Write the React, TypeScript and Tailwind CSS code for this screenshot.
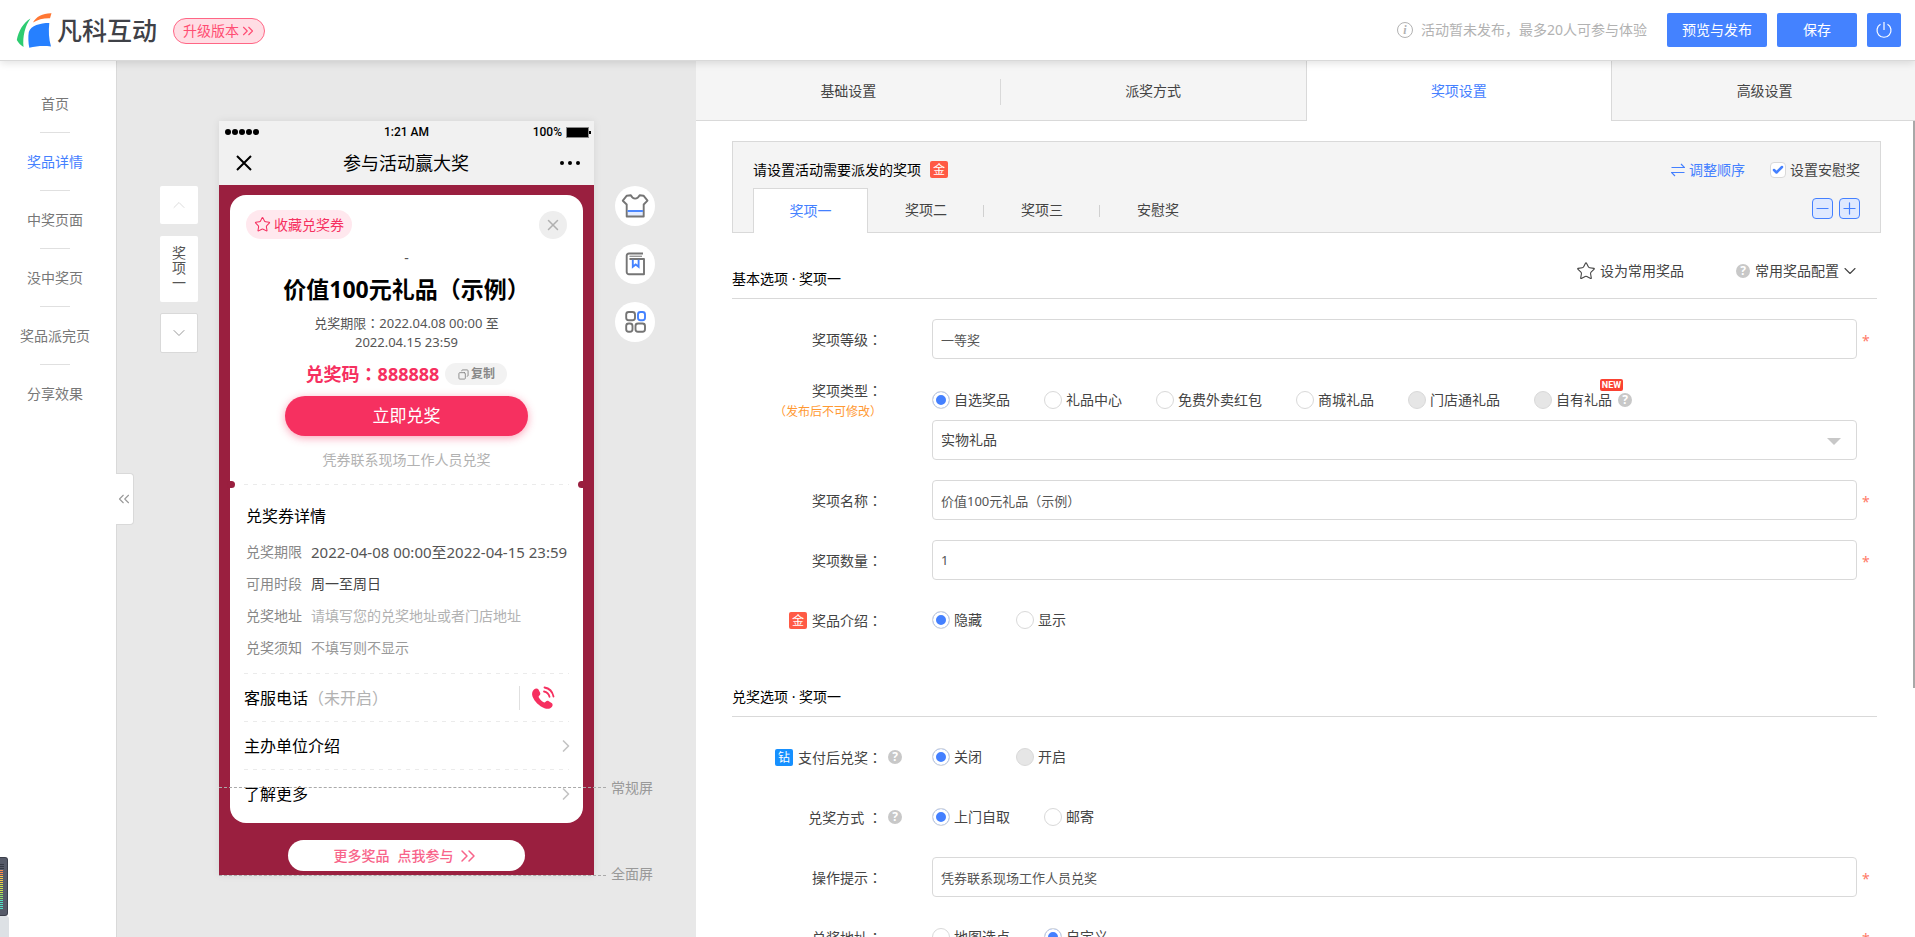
import React from 'react';
import {
  Check,
  ChevronDown,
  ChevronRight,
  ChevronUp,
  ChevronsLeft,
  ChevronsRight,
  Copy,
  Minus,
  Plus,
  Star,
  X,
} from 'lucide-react';

const PAGES = ['首页', '奖品详情', '中奖页面', '没中奖页', '奖品派完页', '分享效果'];

const SETTING_TABS = ['基础设置', '派奖方式', '奖项设置', '高级设置'];

const PRIZE_TABS = ['奖项一', '奖项二', '奖项三', '安慰奖'];

const COUPON_INFO = [
  { label: '兑奖期限', value: '2022-04-08 00:00至2022-04-15 23:59', style: 'text-[15px] text-[#555]' },
  { label: '可用时段', value: '周一至周日', style: 'text-[#444]' },
  { label: '兑奖地址', value: '请填写您的兑奖地址或者门店地址', style: 'text-[#b2b2b2]' },
  { label: '兑奖须知', value: '不填写则不显示', style: 'text-[#999]' },
];

type Option = { label: string; disabled?: boolean; isNew?: boolean };

const PRIZE_TYPES: Option[] = [
  { label: '自选奖品' },
  { label: '礼品中心' },
  { label: '免费外卖红包' },
  { label: '商城礼品' },
  { label: '门店通礼品', disabled: true },
  { label: '自有礼品', disabled: true, isNew: true },
];

// the full-width colon sits in the middle of its box in the TC face
const Colon = () => <span className="font-['Noto_Sans_CJK_TC',sans-serif]">：</span>;

const Logo = () => (
  <svg className="w-9 h-9" viewBox="0 0 36 36">
    <path d="M14.5 6.5C7 11 2.500 19 .8 28c1.500 3 4 5 6.700 7C6.500 24 9 14 14.500 6.500z" fill="#2ecc71" />
    <path d="M17 10.500C20 4.500 27 1 35.500 1.200L34 6.300C28 6 22 7.500 17 10.500z" fill="#ff7733" />
    <path d="M12.800 20C15 13.500 24 11 33.300 11c-.9 8-.5 16 1.700 23.500-7.500-.8-14.500-.5-21.700 1.300-1-5-1.300-11-.5-15.800z" fill="#2680ff" />
  </svg>
);

const Help = () => (
  <span className="w-[14px] h-[14px] rounded-full bg-[#c8c8c8] text-white text-xs leading-[14px] font-bold text-center shrink-0">?</span>
);

const GoldBadge = () => (
  <span className="w-[18px] h-[17px] rounded-xs bg-[#ff5a45] text-white text-xs leading-[17px] text-center shrink-0">金</span>
);

const RadioGroup = ({ name, options, checked }: { name: string; options: Option[]; checked: number }) => (
  <div className="flex items-center gap-[34px] h-10 text-[#444]">
    {options.map((option, i) => (
      <div key={option.label} className="relative flex items-center gap-[6px]">
        <label className="flex items-center gap-1">
          <input
            type="radio"
            name={name}
            defaultChecked={checked === i}
            disabled={option.disabled}
            className="appearance-none w-[18px] h-[18px] rounded-full border border-[#d9d9d9] bg-white checked:bg-[#4480ff] checked:shadow-[inset_0_0_0_3px_#fff] disabled:bg-[#e6e6e6]"
          />
          {option.label}
        </label>
        {option.isNew && (
          <>
            <Help />
            <span className="absolute -top-[11px] left-[66px] w-[23px] h-3 rounded-xs bg-[#fa4232] text-white text-[9px] leading-3 font-bold text-center font-['Roboto',sans-serif]">
              NEW
            </span>
          </>
        )}
      </div>
    ))}
  </div>
);

type FieldProps = {
  label: string;
  id?: string;
  badge?: React.ReactNode;
  help?: boolean;
  note?: string;
  required?: boolean;
  children: React.ReactNode;
};

const Field = ({ label, id, badge, help, note, required, children }: FieldProps) => (
  <div className="flex items-start mt-5">
    <div className={note ? 'w-[150px] h-10 pt-px text-right whitespace-nowrap' : 'w-[150px] h-10 flex justify-end items-center whitespace-nowrap'}>
      {badge && <span className="flex mr-[5px]">{badge}</span>}
      <label htmlFor={id} className={note ? 'block h-[22px] leading-5 text-[#444]' : 'h-5 leading-5 text-[#444]'}>
        {label}
        <Colon />
      </label>
      {note && <p className="text-xs leading-5 text-[#ff9933]">{note}</p>}
    </div>
    <div className="w-[50px] h-10 pl-[6px] flex items-center shrink-0">{help && <Help />}</div>
    <div className="flex-1 min-w-0">{children}</div>
    <span className="w-5 h-10 pl-[5px] leading-[44px] text-[#ff7a66] shrink-0">{required && '*'}</span>
  </div>
);

const TextInput = ({ id, value }: { id: string; value: string }) => (
  <input
    id={id}
    type="text"
    defaultValue={value}
    className="block w-full h-10 px-2 rounded-sm border border-[#d9d9d9] text-[13px] text-[#555] bg-white"
  />
);

const Header = () => (
  <header className="relative z-10 h-[61px] shrink-0 flex items-center bg-white border-b border-[#d9d9d9] shadow-[0_2px_8px_rgba(0,0,0,0.12)] pl-4 pr-[14px]">
    <a href="#" className="flex items-center gap-[5px]">
      <Logo />
      <span className="text-[25px] leading-9 font-medium text-[#3f4147]">凡科互动</span>
    </a>
    <button className="ml-4 mt-[2px] h-[26px] w-[92px] flex items-center justify-center rounded-full border border-[#ff6685] bg-[#ffdde4] text-[#ff4d73]">
      升级版本
      <ChevronsRight className="w-[18px] h-[18px] -mr-[2px]" strokeWidth={1.5} />
    </button>
    <p className="ml-auto flex items-center gap-2 text-[#b2b2b2]">
      <span className="w-4 h-4 rounded-full border border-[#b2b2b2] text-xs leading-[14px] italic font-bold text-center font-['Liberation_Serif',serif]">i</span>
      活动暂未发布，最多20人可参与体验
    </p>
    <button className="ml-5 w-[100px] h-[34px] rounded-xs bg-[#4482ff] text-white">预览与发布</button>
    <button className="ml-[10px] w-20 h-[34px] rounded-xs bg-[#4482ff] text-white">保存</button>
    <button aria-label="退出" className="ml-[10px] w-[34px] h-[34px] flex items-center justify-center rounded-xs bg-[#4482ff] text-white">
      <svg className="w-[18px] h-[18px]" viewBox="0 0 18 18" fill="none" stroke="currentColor" strokeWidth="1.200">
        <path d="M9 1v8M5.500 3.200a7 7 0 1 0 7 0" />
      </svg>
    </button>
  </header>
);

const Sidebar = () => (
  <nav className="relative w-[117px] shrink-0 bg-white border-r border-[#d9d9d9]">
    <ul className="w-[110px] pt-[14px] text-center">
      {PAGES.map((page, i) => (
        <li key={page}>
          {i > 0 && <div className="w-[30px] h-px mx-auto bg-[#e0e0e0]" />}
          <a href="#" className={i === 1 ? 'block leading-[57px] text-[#4480ff]' : 'block leading-[57px] text-[#777]'}>
            {page}
          </a>
        </li>
      ))}
    </ul>
    <button aria-label="收起" className="absolute top-[412px] left-[116px] w-[18px] h-[52px] pr-[2px] flex items-center justify-center bg-white border border-l-0 border-[#d9d9d9] rounded-r-sm text-[#999]">
      <ChevronsLeft className="w-[18px] h-[18px] shrink-0" strokeWidth={1.5} />
    </button>
    <svg className="absolute bottom-0 left-0 w-[9px] h-[80px]" viewBox="0 0 9 80">
      <path d="M0 59h6a3 3 0 0 1 3 3v18H0z" fill="#dde1e5" />
      <path d="M0 0h5a3 3 0 0 1 3 3v53a3 3 0 0 1-3 3H0z" fill="#3a3e4a" />
      <path d="M0 1h5a2 2 0 0 1 2 2v53a2 2 0 0 1-2 2H0z" fill="#565b69" />
      <path d="M0 7.500h4M0 9.500h4M0 11.500h4" stroke="#353944" />
      <path d="M0 13.500h3M0 15.500h3M0 17.500h3" stroke="#ff8c4d" />
      <path d="M0 19.500h3M0 21.500h3M0 23.500h3M0 25.500h3" stroke="#f7c948" />
      <path d="M0 27.500h3M0 29.500h3M0 31.500h3M0 33.500h3M0 35.500h3" stroke="#cfe04a" />
      <path d="M0 37.500h3M0 39.500h3M0 41.500h3" stroke="#8fe06a" />
      <path d="M0 43.500h3M0 45.500h3M0 47.500h3M0 49.500h3M0 51.500h3" stroke="#52e0c4" />
    </svg>
  </nav>
);

const Dashes = () => (
  <div className="h-px bg-[repeating-linear-gradient(90deg,#ebebeb_0_4px,transparent_4px_9px)]" />
);

const Phone = () => (
  <section className="relative w-[375px] shrink-0 bg-[#9a1f3f] pb-1 shadow-[0_0_8px_rgba(0,0,0,0.08)]">
    <div className="h-16 bg-[#f1f1f1] text-black">
      <div className="relative flex items-center justify-between h-[22px] px-[6px] text-xs font-medium font-['Roboto',sans-serif]">
        <span className="flex gap-px">
          {[0, 1, 2, 3, 4].map((dot) => (
            <i key={dot} className="w-[6px] h-[6px] rounded-full bg-black" />
          ))}
        </span>
        <span className="absolute inset-x-0 text-center">1:21 AM</span>
        <span className="flex items-center gap-1">
          100%
          <svg className="w-[25px] h-[11px] -mr-[3px]" viewBox="0 0 25 11">
            <rect x="0.500" y="0.500" width="22" height="10" fill="#000" stroke="#888" />
            <path d="M24 4v3" stroke="#000" strokeWidth="2" />
          </svg>
        </span>
      </div>
      <div className="flex items-center justify-between h-[42px] px-[17px] pb-[2px]">
        <svg className="w-4 h-4" viewBox="0 0 16 16" stroke="#000" strokeWidth="2">
          <path d="M1 1l14 14M15 1L1 15" />
        </svg>
        <h2 className="text-lg leading-6">参与活动赢大奖</h2>
        <span className="flex gap-1 -mr-[3px]">
          {[0, 1, 2].map((dot) => (
            <i key={dot} className="w-1 h-1 rounded-full bg-black" />
          ))}
        </span>
      </div>
    </div>

    <div className="mt-[10px] mx-[11px] pt-[15px] rounded-2xl bg-white">
      <div className="px-4 flex justify-between items-center">
        <button className="w-[106px] h-[29px] flex items-center justify-center gap-[3px] rounded-full bg-[#ffe8ee] text-[#f63060]">
          <Star className="w-[17px] h-[17px]" strokeWidth={1.5} />
          收藏兑奖券
        </button>
        <button aria-label="关闭" className="w-7 h-7 flex items-center justify-center rounded-full bg-[#eee] text-[#b0b0b0]">
          <X className="w-[18px] h-[18px]" />
        </button>
      </div>
      <div className="text-center">
        <p className="mt-[9px] leading-5 text-[#555]">-</p>
        <h1 className="mt-[5px] h-8 text-[23px] leading-8 font-bold text-black">价值100元礼品（示例）</h1>
        <p className="mt-2 h-[38px] text-[13px] leading-[19px] text-[#555]">
          兑奖期限<Colon />2022.04.08 00:00 至<br />
          2022.04.15 23:59
        </p>
        <div className="mt-3 h-[22px] flex items-center justify-center gap-[6px] text-lg leading-5 font-bold text-[#f63060]">
          <span className="h-[22px]">兑奖码<Colon />888888</span>
          <button className="w-[62px] h-[22px] flex items-center justify-center gap-[2px] rounded-full bg-[#f2f2f2] text-xs font-bold text-[#888]">
            <Copy className="w-[11px] h-[11px] -scale-x-100" />
            复制
          </button>
        </div>
        <button className="mt-[11px] w-[243px] h-10 rounded-full bg-[#f63060] text-[17px] text-white shadow-[0_2px_8px_rgba(246,48,96,0.45)] align-top">
          立即兑奖
        </button>
        <p className="mt-[14px] leading-5 text-[#b2b2b2]">凭券联系现场工作人员兑奖</p>
      </div>
      <div className="relative mt-[14px] px-[14px]">
        <Dashes />
        <i className="absolute -left-[3px] -top-[3px] w-[8px] h-[7px] rounded-full bg-[#9a1f3f]" />
        <i className="absolute -right-[3px] -top-[3px] w-[8px] h-[7px] rounded-full bg-[#9a1f3f]" />
      </div>
      <div className="px-4">
        <h3 className="mt-[19px] text-base leading-6 text-black">兑奖券详情</h3>
        <dl className="mt-2 mb-[9px]">
          {COUPON_INFO.map((row) => (
            <div key={row.label} className="flex gap-[9px] h-8 leading-8 whitespace-nowrap">
              <dt className="text-[#888]">{row.label}</dt>
              <dd className={row.style}>{row.value}</dd>
            </div>
          ))}
        </dl>
      </div>
      <div className="px-[14px] pb-[6px] text-base text-black">
        <Dashes />
        <div className="h-[47px] flex items-center">
          客服电话<span className="text-[#b2b2b2]">（未开启）</span>
          <a href="tel:" aria-label="客服电话" className="ml-auto mr-[14px] pl-[11px] h-6 flex items-center border-l border-[#e0e0e0]">
            <svg className="w-6 h-6" viewBox="0 0 24 24">
              <path d="M3 3.500C4.500 2 6.500 2 7.500 3.500L9 6.500c.7 1.200.3 2.300-.8 3.200-.8.7-.6 1.400 0 2.300 1 1.600 2.400 3 4 4 .9.600 1.600.6 2.400-.2.900-1 2-1.300 3.200-.6l2.800 1.800c1.400 1 1.300 2.700.2 4-1.800 2-4.600 2.300-7.300 1.200C8 20 3.500 15.500 1.500 10.500.7 8 1 5.300 3 3.500z" fill="#f63060" />
              <path d="M13 5.500c2.800.5 4.800 2.500 5.500 5.300M13.500 1.500c4.700.8 8 4.200 9 9" fill="none" stroke="#f63060" strokeWidth="1.800" strokeLinecap="round" />
            </svg>
          </a>
        </div>
        {['主办单位介绍', '了解更多'].map((item) => (
          <React.Fragment key={item}>
            <Dashes />
            <a href="#" className="h-[47px] flex items-center justify-between">
              {item}
              <ChevronRight className="w-5 h-5 -mr-[7px] text-[#c4c4c4]" strokeWidth={2} />
            </a>
          </React.Fragment>
        ))}
      </div>
    </div>
    <button className="mt-[17px] mx-auto w-[237px] h-[31px] flex items-center justify-center rounded-full bg-white text-sm font-medium text-[#f8648a]">
      <span>更多奖品</span>
      <span className="ml-2">点我参与</span>
      <ChevronsRight className="ml-[2px] w-6 h-6" strokeWidth={1.5} />
    </button>

    <div className="absolute top-[666px] left-0 w-[387px] border-t border-dashed border-[#aaa]" />
    <span className="absolute top-[657px] left-[392px] leading-5 text-[#999] whitespace-nowrap">常规屏</span>
    <div className="absolute top-[754px] left-0 w-[387px] border-t border-dashed border-[#aaa]" />
    <span className="absolute top-[743px] left-[392px] leading-5 text-[#999] whitespace-nowrap">全面屏</span>
  </section>
);

const ToolButton = ({ label, children }: { label: string; children: React.ReactNode }) => (
  <button aria-label={label} className="w-10 h-10 rounded-full bg-white">
    <svg className="w-10 h-10" viewBox="0 0 40 40" fill="none" stroke="#757575" strokeWidth="1.900" strokeLinejoin="round">
      {children}
    </svg>
  </button>
);

const Preview = () => (
  <main className="w-[579px] shrink-0 flex items-start justify-center gap-[21px] pt-[60px] pl-[2px] bg-[#e8e8e8]">
    <div className="mt-[65px] w-[38px] flex flex-col text-[#555]">
      <button aria-label="上一个" className="h-[38px] flex items-center justify-center rounded-xs bg-white text-[#ddd]">
        <ChevronUp className="w-5 h-5" strokeWidth={1.2} />
      </button>
      <button className="mt-3 h-[66px] px-3 pb-1 rounded-xs bg-white leading-[15px]">奖项一</button>
      <button aria-label="下一个" className="mt-[11px] h-10 flex items-center justify-center rounded-xs bg-white border border-[#d9d9d9] text-[#999]">
        <ChevronDown className="w-5 h-5" strokeWidth={1.2} />
      </button>
    </div>
    <Phone />
    <div className="mt-[65px] flex flex-col gap-[18px]">
      <ToolButton label="皮肤">
        <path d="M12 25.500h17v5H12z" fill="#e3ecff" stroke="none" />
        <path d="M7.800 14.700l4-5 4-.5c1 2.200 2.400 3.400 4.300 3.400s3.500-1.200 4.600-3.400l3.800.5 4 5-3.800 3.800v12H11.700v-12z" />
        <path d="M12.600 25h15.300" stroke="#4482ff" />
      </ToolButton>
      <ToolButton label="模板">
        <path d="M28 9.500H14a2.300 2.300 0 0 0-2.300 2.500v16a2.300 2.300 0 0 0 2.300 2.300h15V15H14.500" />
        <path d="M14.500 12.300H27" stroke="#999" strokeWidth="1.400" />
        <path d="M17.800 15.800v7l2.900-2.300 2.900 2.300v-7" stroke="#4482ff" strokeLinejoin="miter" />
      </ToolButton>
      <ToolButton label="组件">
        <rect x="11.200" y="10" width="8.800" height="8.300" rx="2.500" />
        <rect x="23" y="10" width="7" height="8.300" rx="2.500" stroke="#4482ff" />
        <rect x="11.200" y="21.500" width="6.300" height="8.300" rx="2.500" />
        <rect x="20.500" y="21.500" width="9.500" height="8.300" rx="2.500" />
      </ToolButton>
    </div>
  </main>
);

const SectionTitle = ({ title, children }: { title: string; children?: React.ReactNode }) => (
  <div className="h-[65px] pt-[26px] flex items-center justify-between border-b border-[#d9d9d9]">
    <h3 className="text-black">{title}</h3>
    {children}
  </div>
);

const Settings = () => (
  <section className="relative flex-1 min-w-0 flex flex-col bg-white overflow-hidden">
    <div className="flex h-[60px] shrink-0 -mr-[2px] text-[#444]">
      {SETTING_TABS.map((tab, i) => (
        <button
          key={tab}
          className={
            i === 2
              ? 'flex-1 bg-white border-x border-[#d9d9d9] text-[#4480ff]'
              : 'relative flex-1 bg-[#f5f5f5] border-b border-[#d9d9d9]'
          }
        >
          {i === 0 && <i className="absolute right-0 top-[18px] w-px h-[26px] bg-[#d9d9d9]" />}
          {tab}
        </button>
      ))}
    </div>
    <div className="flex-1 min-h-0 overflow-hidden pl-9 pr-[38px]">
      <div className="mt-5 -mr-1 bg-[#f4f4f4] border border-b-0 border-[#d9d9d9]">
        <div className="h-[46px] pt-[10px] px-5 flex items-center">
          <h2 className="text-black">请设置活动需要派发的奖项</h2>
          <span className="ml-[9px] mb-[2px] flex"><GoldBadge /></span>
          <button className="ml-auto flex items-center gap-1 text-[#4480ff]">
            <svg className="w-[14px] h-[14px]" viewBox="0 0 14 14" fill="none" stroke="currentColor" strokeWidth="1.200">
              <path d="M.5 4.500h13L10 1M13.500 9.500H.5L4 13" />
            </svg>
            调整顺序
          </button>
          <label className="relative ml-[25px] flex items-center gap-1 text-[#444]">
            <input type="checkbox" defaultChecked className="peer appearance-none w-4 h-4 rounded-sm border border-[#d9d9d9] bg-white" />
            <Check className="absolute left-[2px] w-3 h-3 text-[#4480ff] opacity-0 peer-checked:opacity-100" strokeWidth={5} />
            设置安慰奖
          </label>
        </div>
        <div className="h-[45px] px-5 flex items-center border-b border-[#d9d9d9]">
          {PRIZE_TABS.map((tab, i) => (
            <button
              key={tab}
              className={
                i === 0
                  ? 'w-[115px] h-[45px] -mb-px bg-white border border-b-0 border-[#d9d9d9] text-[#4480ff]'
                  : 'relative w-[116px] h-[45px] text-[#444]'
              }
            >
              {tab}
              {(i === 1 || i === 2) && <i className="absolute right-0 top-[17px] w-px h-3 bg-[#d0d0d0]" />}
            </button>
          ))}
          <button aria-label="减少" className="ml-auto mb-1 w-[21px] h-[21px] flex items-center justify-center rounded-sm border border-[#4480ff] bg-[#dfe9ff] text-[#4480ff]">
            <Minus className="w-[19px] h-[19px] shrink-0" strokeWidth={1.5} />
          </button>
          <button aria-label="增加" className="ml-[6px] mb-1 w-[21px] h-[21px] flex items-center justify-center rounded-sm border border-[#4480ff] bg-[#dfe9ff] text-[#4480ff]">
            <Plus className="w-[19px] h-[19px] shrink-0" strokeWidth={1.5} />
          </button>
        </div>
      </div>

      <div className="mt-px">
        <SectionTitle title="基本选项 · 奖项一">
          <div className="flex mb-4 mr-5 text-[#444]">
            <button className="flex items-center gap-1">
              <Star className="w-5 h-5" strokeWidth={1.3} />
              设为常用奖品
            </button>
            <button className="ml-[52px] flex items-center gap-[5px]">
              <Help />
              常用奖品配置
              <ChevronDown className="w-5 h-5 -ml-1 -mr-[3px]" strokeWidth={1.3} />
            </button>
          </div>
        </SectionTitle>
      </div>
      <Field label="奖项等级" id="level" required>
        <TextInput id="level" value="一等奖" />
      </Field>
      <Field label="奖项类型" id="gift" note="（发布后不可修改）">
        <div className="pt-px">
          <RadioGroup name="type" options={PRIZE_TYPES} checked={0} />
        </div>
        <div className="relative">
          <select id="gift" className="appearance-none block w-full h-10 px-2 rounded-sm border border-[#d9d9d9] bg-white text-[#444]">
            <option>实物礼品</option>
          </select>
          <svg className="absolute right-4 top-[18px] w-[14px] h-[7px]" viewBox="0 0 14 7">
            <path d="M0 0h14L7 7z" fill="#c8c8c8" />
          </svg>
        </div>
      </Field>
      <Field label="奖项名称" id="name" required>
        <TextInput id="name" value="价值100元礼品（示例）" />
      </Field>
      <Field label="奖项数量" id="amount" required>
        <TextInput id="amount" value="1" />
      </Field>
      <Field label="奖品介绍" badge={<GoldBadge />}>
        <RadioGroup name="intro" options={[{ label: '隐藏' }, { label: '显示' }]} checked={0} />
      </Field>

      <div className="mt-3">
        <SectionTitle title="兑奖选项 · 奖项一" />
      </div>
      <Field
        label="支付后兑奖"
        help
        badge={<span className="w-[18px] h-[17px] rounded-xs bg-[#1690ff] text-white text-xs leading-[17px] text-center">钻</span>}
      >
        <RadioGroup name="pay" options={[{ label: '关闭' }, { label: '开启', disabled: true }]} checked={0} />
      </Field>
      <Field label="兑奖方式 " help>
        <RadioGroup name="method" options={[{ label: '上门自取' }, { label: '邮寄' }]} checked={0} />
      </Field>
      <Field label="操作提示" id="tip" required>
        <TextInput id="tip" value="凭券联系现场工作人员兑奖" />
      </Field>
      <Field label="兑奖地址" required>
        <RadioGroup name="address" options={[{ label: '地图选点' }, { label: '自定义' }]} checked={1} />
      </Field>
    </div>
    <div className="absolute right-0 top-[60px] w-[2px] h-[567px] bg-[#a8a8a8]" />
  </section>
);

export default function App() {
  return (
    <div className="h-screen flex flex-col overflow-hidden text-sm font-['Noto_Sans','Noto_Sans_CJK_SC',sans-serif]">
      <Header />
      <div className="flex-1 min-h-0 flex">
        <Sidebar />
        <Preview />
        <Settings />
      </div>
    </div>
  );
}
